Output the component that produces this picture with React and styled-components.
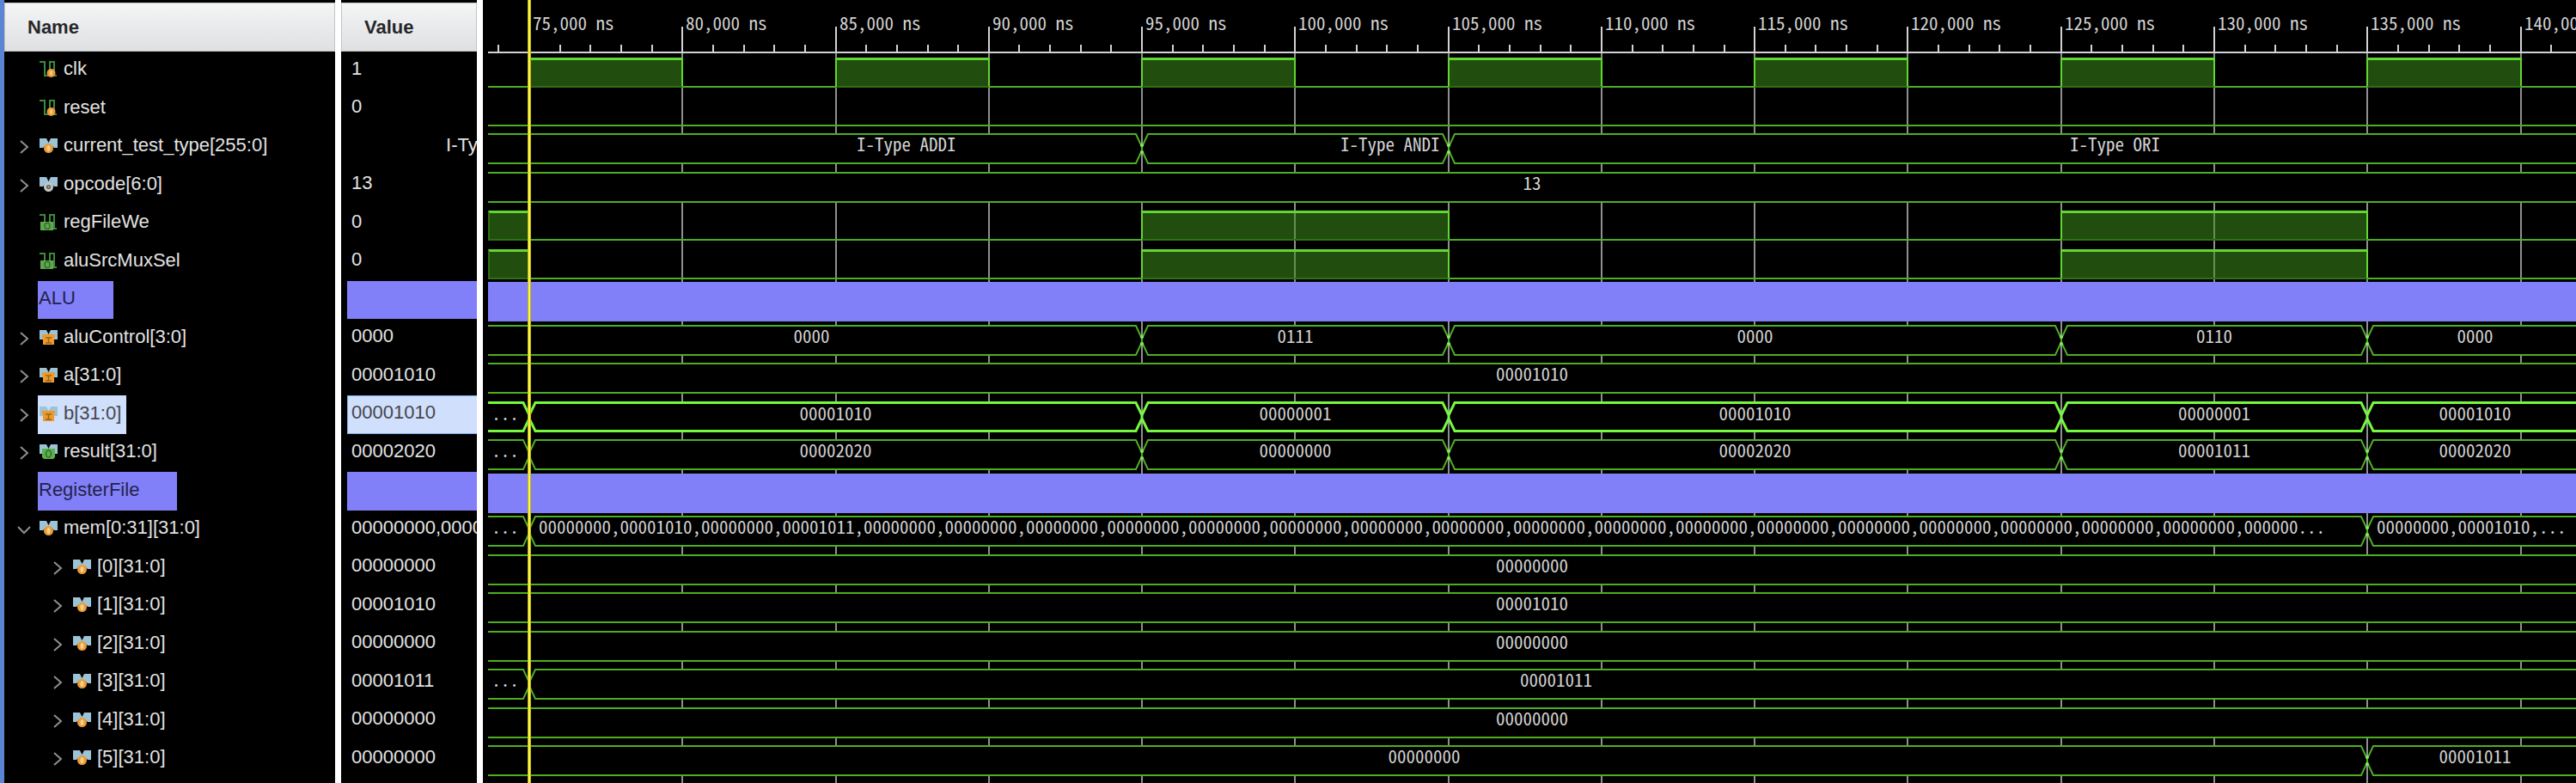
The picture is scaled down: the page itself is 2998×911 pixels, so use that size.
import React, { useState } from "react";
import styled, { createGlobalStyle, css } from "styled-components";

const GlobalStyle = createGlobalStyle`
  *, *::before, *::after { box-sizing: border-box; }
  html, body { margin: 0; background: #000; }
  body { font-family: "Liberation Sans", Arial, sans-serif; font-size: 22px; color: #e2e2e2; overflow-x: hidden; }
`;

const colors = {
  divider: "#8280f8",
  selected: "#d0dffb",
  selectedText: "#45464e",
  trace: "#4eae22",
  traceHigh: "#62d631",
  traceSelected: "#76f83e",
  grid: "#8f8f8f",
  ruler: "#d2d2d2",
};

/* ---------- data ---------- */

const zero = "00000000";
const words = (n) =>
  Array.from({ length: n }, (_, i) => (i === 1 ? "00001010" : i === 3 ? "00001011" : zero));
const testName = (name) => name.padStart(32);

const rows = [
  { kind: "scalar", icon: "reg", name: "clk", value: "1",
    wave: [[0, 75], [1, 80], [0, 85], [1, 90], [0, 95], [1, 100], [0, 105], [1, 110], [0, 115], [1, 120], [0, 125], [1, 130], [0, 135], [1, 140], [0]] },
  { kind: "scalar", icon: "reg", name: "reset", value: "0", wave: [[0]] },
  { kind: "bus", icon: "busReg", name: "current_test_type[255:0]", value: "I-Type ADDI".padStart(29),
    wave: [[testName("I-Type ADDI"), 95], [testName("I-Type ANDI"), 105], [testName("I-Type ORI")]] },
  { kind: "bus", icon: "busNet", name: "opcode[6:0]", value: "13", wave: [["13"]] },
  { kind: "scalar", icon: "out", name: "regFileWe", value: "0", wave: [[1, 75], [0, 95], [1, 105], [0, 125], [1, 135], [0]] },
  { kind: "scalar", icon: "out", name: "aluSrcMuxSel", value: "0", wave: [[1, 75], [0, 95], [1, 105], [0, 125], [1, 135], [0]] },
  { kind: "divider", name: "ALU" },
  { kind: "bus", icon: "busIn", name: "aluControl[3:0]", value: "0000",
    wave: [["0000", 95], ["0111", 105], ["0000", 125], ["0110", 135], ["0000"]] },
  { kind: "bus", icon: "busIn", name: "a[31:0]", value: "00001010", wave: [["00001010"]] },
  { kind: "bus", icon: "busIn", name: "b[31:0]", value: "00001010", selected: true,
    wave: [["...", 75], ["00001010", 95], ["00000001", 105], ["00001010", 125], ["00000001", 135], ["00001010"]] },
  { kind: "bus", icon: "busOut", name: "result[31:0]", value: "00002020",
    wave: [["...", 75], ["00002020", 95], ["00000000", 105], ["00002020", 125], ["00001011", 135], ["00002020"]] },
  { kind: "divider", name: "RegisterFile" },
  { kind: "bus", icon: "busReg", name: "mem[0:31][31:0]", value: words(32).join(","), open: true, list: true,
    wave: [["...", 75], [words(21).join(",") + ",000000...", 135], [words(2).join(",") + ",..."]] },
  ...[zero, "00001010", zero, "00001011", zero, zero].map((value, i) => ({
    kind: "bus", icon: "busReg", name: `[${i}][31:0]`, value, child: true,
    wave: i === 3 ? [["...", 75], [value]] : i === 5 ? [[value, 135], ["00001011"]] : [[value]],
  })),
];

/* Horizontal position, inside the wave pane, of a time given in thousands of ns. */
const CURSOR_X = 48;
const xAt = (t) => Math.round(CURSOR_X + ((t - 75) * 178.27) / 5);
const times = Array.from({ length: 40 }, (_, i) => 75 + i * 5);

/* ---------- panes ---------- */

const Viewer = styled.main`
  display: grid;
  grid-template-columns: 385px 165px minmax(0, 1fr);
  min-height: 100vh;
  border-left: 5px solid #5b85d4;
`;

const Pane = styled.section`
  min-width: 0;
  overflow: hidden;
  padding-top: 3px;
  background: #000;
`;

const Splitted = styled(Pane)`
  & + & { border-left: 7px solid #fff; }
`;

const PaneHeader = styled.h2`
  display: flex;
  align-items: center;
  height: 57px;
  margin: 0;
  padding: 0 26px;
  border: 1px solid #c4c4c6;
  background: linear-gradient(#f4f5f5, #dfe0e2);
  color: #26262a;
  font-size: 22px;
  font-weight: 700;
`;

const RowList = styled.ul`
  margin: 0;
  padding: 0;
  list-style: none;
`;

const Row = styled.li`
  display: flex;
  align-items: center;
  height: 44px;
  white-space: pre;
  &:nth-child(even) { height: 45px; }
`;

const NameRow = styled(Row)`
  padding-left: ${(p) => (p.$child ? 50 : 11)}px;
`;

const Chevron = styled.button`
  display: flex;
  align-items: center;
  justify-content: center;
  width: 23px;
  height: 24px;
  margin-right: 5px;
  padding: 0;
  border: 0;
  background: none;
  color: #8f8f8f;
`;

const ChevronSpace = styled.span`
  width: 28px;
`;

const Label = styled.span`
  display: flex;
  align-items: center;
  gap: 7px;
  align-self: stretch;
  padding: 0 6px 4px 2px;
  ${(p) => p.$selected && css`background: ${colors.selected}; color: ${colors.selectedText};`}
`;

const DividerLabel = styled.span`
  display: flex;
  align-items: center;
  align-self: stretch;
  padding: 0 44px 4px 1px;
  background: ${colors.divider};
  color: #23234a;
`;

const ValueRow = styled(Row)`
  padding-left: 7px;
`;

const ValueCell = styled.span`
  flex: 1;
  align-self: stretch;
  min-width: 0;
  overflow: hidden;
  padding: 0 0 4px 4px;
  border: 1px solid transparent;
  border-right: 0;
  line-height: 38px;
  ${(p) => p.$divider && css`background: ${colors.divider};`}
  ${(p) => p.$selected && css`background: ${colors.selected}; border-color: #7fb0e6; color: ${colors.selectedText};`}
`;

/* ---------- wave pane ---------- */

const WavePane = styled(Pane)`
  position: relative;
  padding: 0 0 0 6px;
  border-left: 7px solid #fff;
  font-family: "Noto Sans CJK JP", "Liberation Mono", monospace;
  font-feature-settings: "hwid";
  font-size: 21px;
  line-height: 20px;
  color: #d2d2d2;
`;

const WaveArea = styled.div`
  position: relative;
  min-height: 100%;
`;

const GridLines = styled.svg`
  position: absolute;
  inset: 0;
  width: 100%;
  height: 100%;
`;

const Cursor = styled.div`
  position: absolute;
  top: 0;
  bottom: 0;
  left: ${CURSOR_X - 2}px;
  width: 4px;
  border: solid #b8b222;
  border-width: 0 1px;
  background: #fdf43e;
`;

const Ruler = styled.div`
  position: relative;
  display: flex;
  height: 60px;
  padding: 16px 0 0 ${CURSOR_X}px;
  overflow: hidden;
`;

const RulerLabel = styled.span`
  flex: none;
  width: ${(p) => p.$width}px;
  padding-left: 4px;
  white-space: pre;
`;

const WaveRows = styled(RowList)`
  position: relative;
`;

const WaveRow = styled(Row)`
  height: 45px;
  align-items: flex-start;
  &:nth-child(even) { height: 44px; }
`;

const DividerBar = styled.div`
  flex: 1;
  height: 46px;
  margin-top: 1px;
  background: ${colors.divider};
`;

const sized = css`
  flex: ${(p) => (p.$width == null ? "1 1 0" : "none")};
  width: ${(p) => (p.$width == null ? "auto" : p.$width + "px")};
  min-width: 0;
`;

const Low = styled.div`
  ${sized}
  height: 35px;
  margin-top: 7px;
  border-bottom: 2px solid ${colors.trace};
`;

const High = styled.div`
  ${sized}
  height: 35px;
  margin: 7px -1px 0;
  border: 2px solid ${colors.traceHigh};
  border-top-width: 3px;
  border-bottom-color: #2f6f17;
  background: rgba(62, 148, 28, 0.53);
  ${(p) => p.$first && css`margin-left: 0; border-left-color: #2f6f17;`}
`;

const BusBody = styled.div`
  ${sized}
  display: flex;
  justify-content: ${(p) => (p.$start ? "flex-start" : "center")};
  height: 36px;
  margin-top: 6px;
  padding-left: ${(p) => (p.$start ? 3 : 0)}px;
  border: solid ${(p) => (p.$selected ? colors.traceSelected : colors.trace)};
  border-width: ${(p) => (p.$selected ? 3 : 2)}px 0;
  background: #000;
`;

const BusText = styled.span`
  flex: none;
`;

const SeamSvg = styled.svg`
  flex: none;
  width: 16px;
  height: 36px;
  margin-top: 6px;
`;

function Seam({ selected }) {
  const w = selected ? 3 : 2;
  const o = w / 2;
  const stroke = selected ? colors.traceSelected : colors.trace;
  return (
    <SeamSvg viewBox="0 0 16 36" aria-hidden="true">
      <path
        d={`M0 ${o}H1L8 16V20L1 ${36 - o}H0M16 ${o}H15L8 16V20L15 ${36 - o}H16`}
        fill="none" stroke={stroke} strokeWidth={w}
      />
      <circle cx="8" cy="14" r="2" fill="#84e866" />
      <circle cx="8" cy="22" r="2" fill="#84e866" />
    </SeamSvg>
  );
}

function Wave({ row }) {
  if (row.kind === "divider") return <WaveRow><DividerBar /></WaveRow>;
  let left = 0;
  return (
    <WaveRow>
      {row.wave.map(([value, end], i) => {
        const right = end == null ? null : xAt(end);
        const from = left;
        left = right;
        if (row.kind === "scalar") {
          if (!value) return <Low key={i} $width={right == null ? null : right - from} />;
          return <High key={i} $first={i === 0} $width={right - from + (i === 0 ? 1 : 2)} />;
        }
        const trim = (i > 0 ? 8 : 0) + 8;
        return (
          <React.Fragment key={i}>
            {i > 0 && <Seam selected={row.selected} />}
            <BusBody
              $width={right == null ? null : right - from - trim}
              $selected={row.selected}
              $start={row.list && i > 0}
            >
              <BusText>{value}</BusText>
            </BusBody>
          </React.Fragment>
        );
      })}
    </WaveRow>
  );
}

function Grid() {
  const minor = Array.from({ length: 200 }, (_, i) => 74 + i).filter((t) => t % 5 !== 0);
  return (
    <GridLines aria-hidden="true">
      <rect x="0" y="60" width="100%" height="2" fill={colors.ruler} />
      {minor.map((t) => (
        <rect key={t} x={xAt(t) - 1} y="52" width="2" height="9" fill={colors.ruler} />
      ))}
      {times.slice(1).map((t) => (
        <g key={t}>
          <rect x={xAt(t) - 1} y="31" width="2" height="30" fill={colors.ruler} />
          <rect x={xAt(t) - 1} y="62" width="2" height="100%" fill={colors.grid} />
        </g>
      ))}
    </GridLines>
  );
}

/* ---------- icons ---------- */

const IconSvg = styled.svg`
  flex: none;
  width: 21px;
  height: 20px;
`;

function SignalIcon({ type }) {
  const bus = type.startsWith("bus");
  return (
    <IconSvg viewBox="0 0 21 20" aria-hidden="true">
      {bus ? (
        <path d="M0 2H8L10.5 7L13 2H21V13H17L14 10H7L4 13H0Z" fill="#9dc3d6" />
      ) : (
        <path d="M0 2H6V18H12V2H17V18H20" fill="none" stroke="#3c8a3c" strokeWidth="2" />
      )}
      {type === "reg" && <><circle cx="13.5" cy="15" r="5" fill="#eb9b36" /><ellipse cx="13.5" cy="15" rx="1.5" ry="3" fill="#f8cf8c" /></>}
      {type === "out" && <><rect x="1" y="10" width="15" height="10" fill="#5fa84c" /><ellipse cx="9" cy="15" rx="3" ry="3.5" fill="none" stroke="#2f6f2c" strokeWidth="1.5" /></>}
      {type === "busReg" && <><circle cx="10.5" cy="13.5" r="5.500" fill="#eb9b36" /><ellipse cx="10.5" cy="13.5" rx="2" ry="3.500" fill="#f8cf8c" /></>}
      {type === "busNet" && <><circle cx="10.5" cy="13.5" r="4" fill="#555" stroke="#c6c6c6" strokeWidth="3" /><circle cx="10.5" cy="13.5" r="1" fill="#cfcfcf" /></>}
      {type === "busIn" && <><path d="M3 7H18V11H17V19H4V11H3Z" fill="#ec9a2c" /><path d="M7 11H14M7 17H14M10.500 11V17" stroke="#9a6218" strokeWidth="1.500" /></>}
      {type === "busOut" && <><path d="M3 7H18V17L16 19H5L3 17Z" fill="#5bb04c" /><ellipse cx="10.5" cy="13" rx="3" ry="4" fill="none" stroke="#2d6e2a" strokeWidth="1.500" /></>}
    </IconSvg>
  );
}

function ChevronIcon({ open }) {
  return (
    <svg width="16" height="18" viewBox="0 0 16 18" fill="none" stroke="currentColor" strokeWidth="2" aria-hidden="true">
      <path d={open ? "M1 6L8 13L15 6" : "M4 2L12 9L4 16"} />
    </svg>
  );
}

/* ---------- app ---------- */

export default function App() {
  const [open, setOpen] = useState(true);
  const shown = rows.filter((r) => open || !r.child);
  return (
    <>
      <GlobalStyle />
      <Viewer>
        <Splitted>
          <PaneHeader>Name</PaneHeader>
          <RowList>
            {shown.map((r) => (
              <NameRow key={r.name} $child={r.child}>
                {r.kind === "bus" ? (
                  <Chevron
                    type="button"
                    aria-label={`Expand ${r.name}`}
                    aria-expanded={r.open ? open : false}
                    onClick={r.open ? () => setOpen(!open) : undefined}
                  >
                    <ChevronIcon open={r.open && open} />
                  </Chevron>
                ) : (
                  <ChevronSpace />
                )}
                {r.kind === "divider" ? (
                  <DividerLabel>{r.name}</DividerLabel>
                ) : (
                  <Label $selected={r.selected}>
                    <SignalIcon type={r.icon} />
                    {r.name}
                  </Label>
                )}
              </NameRow>
            ))}
          </RowList>
        </Splitted>
        <Splitted>
          <PaneHeader>Value</PaneHeader>
          <RowList>
            {shown.map((r) => (
              <ValueRow key={r.name}>
                <ValueCell $divider={r.kind === "divider"} $selected={r.selected}>{r.value}</ValueCell>
              </ValueRow>
            ))}
          </RowList>
        </Splitted>
        <WavePane>
          <WaveArea>
            <Grid />
            <Ruler>
              {times.map((t) => (
                <RulerLabel key={t} $width={xAt(t + 5) - xAt(t)}>{`${t},000 ns`}</RulerLabel>
              ))}
            </Ruler>
            <WaveRows>
              {shown.map((r) => <Wave key={r.name} row={r} />)}
            </WaveRows>
            <Cursor />
          </WaveArea>
        </WavePane>
      </Viewer>
    </>
  );
}
